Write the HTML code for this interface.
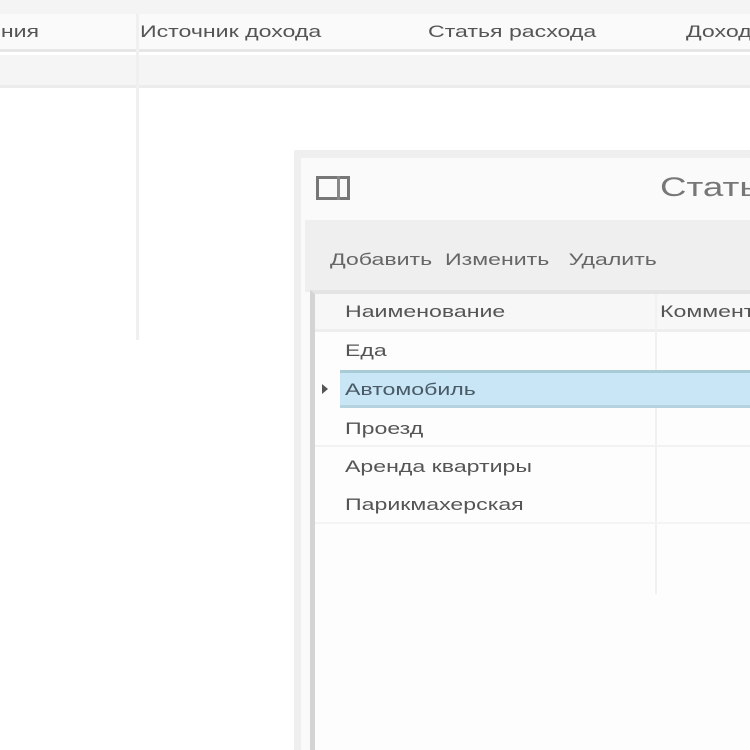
<!DOCTYPE html>
<html><head><meta charset="utf-8"><style>
html,body{margin:0;width:750px;height:750px;overflow:hidden}
body{background:#fff;font-family:"Liberation Sans",sans-serif;position:relative;color:#555}
#w{position:absolute;left:0;top:0;width:750px;height:750px;overflow:hidden}
div{position:absolute;box-sizing:border-box}
.t{white-space:nowrap;font-size:17px;transform:scaleX(1.36);transform-origin:0 0}
</style></head><body><div id="w">
<div style="left:0;top:0;width:750px;height:14px;background:#f4f4f4"></div>
<div style="left:0;top:14px;width:750px;height:38px;background:#fafafa;border-bottom:3px solid #e6e6e6"></div>
<div class="t" style="left:-12px;top:22px">ения</div>
<div class="t" style="left:140px;top:22px">Источник дохода</div>
<div class="t" style="left:428px;top:22px">Статья расхода</div>
<div class="t" style="left:686px;top:22px">Доход</div>
<div style="left:0;top:55px;width:750px;height:33px;background:#f5f5f5;border-bottom:3px solid #ececec"></div>
<div style="left:136px;top:14px;width:3px;height:326px;background:#f0f0f0"></div>

<div style="left:294px;top:150px;width:456px;height:600px;background:#efefef"></div>
<div style="left:301px;top:158px;width:449px;height:592px;background:#fafafa"></div>
<div style="left:316px;top:176px;width:34px;height:24px;border:3px solid #777;background:#fafafa"></div>
<div style="left:337px;top:176px;width:3px;height:24px;background:#888"></div>
<div class="t" style="left:660px;top:172px;font-size:27px;color:#777">Статьи</div>
<div style="left:305px;top:220px;width:445px;height:72px;background:#efefef"></div>
<div class="t" style="left:330px;top:250px;color:#666">Добавить&nbsp; Изменить&nbsp;&nbsp; Удалить</div>
<div style="left:310px;top:290px;width:440px;height:460px;background:#fdfdfd;border-left:5px solid #d4d4d4;border-top:4px solid #e4e4e4"></div>
<div style="left:315px;top:294px;width:435px;height:38px;background:#f7f7f7;border-bottom:3px solid #eeeeee"></div>
<div style="left:655px;top:294px;width:2px;height:300px;background:#f1f1f1"></div>
<div class="t" style="left:345px;top:302px;color:#555">Наименование</div>
<div class="t" style="left:660px;top:302px;color:#555">Комментарий</div>
<div style="left:340px;top:370px;width:410px;height:38px;background:#c8e6f5;border-top:3px solid #a9cbd6;border-bottom:3px solid #b4d3de"></div>
<div style="left:322px;top:384px;width:0;height:0;border-left:6px solid #555;border-top:5px solid transparent;border-bottom:5px solid transparent"></div>
<div class="t" style="left:345px;top:341px">Еда</div>
<div class="t" style="left:345px;top:380px;color:#4a5a66">Автомобиль</div>
<div class="t" style="left:345px;top:419px">Проезд</div>
<div class="t" style="left:345px;top:457px">Аренда квартиры</div>
<div class="t" style="left:345px;top:495px">Парикмахерская</div>
<div style="left:315px;top:445px;width:435px;height:2px;background:#f2f2f2"></div>
<div style="left:315px;top:522px;width:435px;height:2px;background:#f4f4f4"></div>
</div></body></html>
